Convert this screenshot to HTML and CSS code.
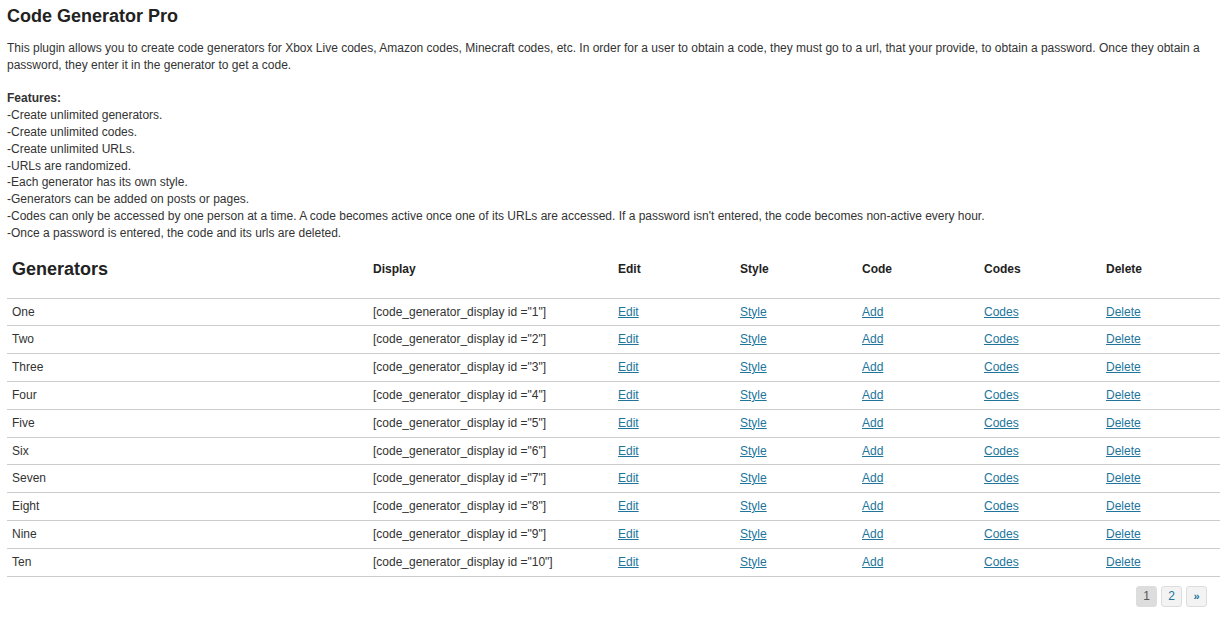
FILE: index.html
```html
<!DOCTYPE html>
<html>
<head>
<meta charset="utf-8">
<title>Code Generator Pro</title>
<link rel="stylesheet" href="styles.css">
</head>
<body>
<div class="wrap">
  <h1 class="title">Code Generator Pro</h1>
  <p class="intro">This plugin allows you to create code generators for Xbox Live codes, Amazon codes, Minecraft codes, etc. In order for a user to obtain a code, they must go to a url, that your provide, to obtain a password. Once they obtain a password, they enter it in the generator to get a code.</p>
  <div class="features">
    <strong>Features:</strong><br>
    -Create unlimited generators.<br>
    -Create unlimited codes.<br>
    -Create unlimited URLs.<br>
    -URLs are randomized.<br>
    -Each generator has its own style.<br>
    -Generators can be added on posts or pages.<br>
    -Codes can only be accessed by one person at a time. A code becomes active once one of its URLs are accessed. If a password isn't entered, the code becomes non-active every hour.<br>
    -Once a password is entered, the code and its urls are deleted.
  </div>
  <table class="gens">
    <colgroup>
      <col class="c-name"><col class="c-display"><col class="c-act"><col class="c-act"><col class="c-act"><col class="c-act"><col>
    </colgroup>
    <thead>
      <tr>
        <th class="th-main">Generators</th>
        <th>Display</th>
        <th>Edit</th>
        <th>Style</th>
        <th>Code</th>
        <th>Codes</th>
        <th>Delete</th>
      </tr>
    </thead>
    <tbody>
      <tr><td>One</td><td>[code_generator_display id ="1"]</td><td><a href="#">Edit</a></td><td><a href="#">Style</a></td><td><a href="#">Add</a></td><td><a href="#">Codes</a></td><td><a href="#">Delete</a></td></tr>
      <tr><td>Two</td><td>[code_generator_display id ="2"]</td><td><a href="#">Edit</a></td><td><a href="#">Style</a></td><td><a href="#">Add</a></td><td><a href="#">Codes</a></td><td><a href="#">Delete</a></td></tr>
      <tr><td>Three</td><td>[code_generator_display id ="3"]</td><td><a href="#">Edit</a></td><td><a href="#">Style</a></td><td><a href="#">Add</a></td><td><a href="#">Codes</a></td><td><a href="#">Delete</a></td></tr>
      <tr><td>Four</td><td>[code_generator_display id ="4"]</td><td><a href="#">Edit</a></td><td><a href="#">Style</a></td><td><a href="#">Add</a></td><td><a href="#">Codes</a></td><td><a href="#">Delete</a></td></tr>
      <tr><td>Five</td><td>[code_generator_display id ="5"]</td><td><a href="#">Edit</a></td><td><a href="#">Style</a></td><td><a href="#">Add</a></td><td><a href="#">Codes</a></td><td><a href="#">Delete</a></td></tr>
      <tr><td>Six</td><td>[code_generator_display id ="6"]</td><td><a href="#">Edit</a></td><td><a href="#">Style</a></td><td><a href="#">Add</a></td><td><a href="#">Codes</a></td><td><a href="#">Delete</a></td></tr>
      <tr><td>Seven</td><td>[code_generator_display id ="7"]</td><td><a href="#">Edit</a></td><td><a href="#">Style</a></td><td><a href="#">Add</a></td><td><a href="#">Codes</a></td><td><a href="#">Delete</a></td></tr>
      <tr><td>Eight</td><td>[code_generator_display id ="8"]</td><td><a href="#">Edit</a></td><td><a href="#">Style</a></td><td><a href="#">Add</a></td><td><a href="#">Codes</a></td><td><a href="#">Delete</a></td></tr>
      <tr><td>Nine</td><td>[code_generator_display id ="9"]</td><td><a href="#">Edit</a></td><td><a href="#">Style</a></td><td><a href="#">Add</a></td><td><a href="#">Codes</a></td><td><a href="#">Delete</a></td></tr>
      <tr><td>Ten</td><td>[code_generator_display id ="10"]</td><td><a href="#">Edit</a></td><td><a href="#">Style</a></td><td><a href="#">Add</a></td><td><a href="#">Codes</a></td><td><a href="#">Delete</a></td></tr>
    </tbody>
  </table>
  <div class="pager">
    <span class="page current">1</span>
    <a class="page" href="#">2</a>
    <a class="page next" href="#">»</a>
  </div>
</div>
</body>
</html>
```

FILE: styles.css
```css
html, body {
  margin: 0;
  padding: 0;
  background: #fff;
}
body {
  font-family: "Liberation Sans", Arial, sans-serif;
  font-size: 12px;
  line-height: 16.8px;
  color: #333;
}
.wrap {
  padding-left: 7px;
}
.title {
  font-size: 18px;
  line-height: 22px;
  font-weight: bold;
  color: #222;
  margin: 0;
  padding-top: 5px;
}
.intro {
  margin: 13px 0 16.8px 0;
}
.features strong {
  color: #333;
}
.gens {
  width: 100%;
  border-collapse: collapse;
  margin-top: 0;
  table-layout: fixed;
}
.c-name { width: 361px; }
.c-display { width: 245px; }
.c-act { width: 122px; }
.gens th {
  text-align: left;
  font-size: 12px;
  font-weight: bold;
  color: #222;
  height: 56px;
  padding: 0 5px;
  vertical-align: middle;
  border-bottom: 1px solid #ccc;
}
.gens th.th-main {
  font-size: 18px;
}
.gens td {
  padding: 5px 5px;
  border-bottom: 1px solid #ccc;
  vertical-align: middle;
}
.gens a {
  color: #21759b;
  text-decoration: underline;
}
.pager {
  display: flex;
  justify-content: flex-end;
  gap: 4px;
  padding: 9px 13px 0 0;
}
.page {
  display: flex;
  align-items: center;
  justify-content: center;
  width: 19px;
  height: 19px;
  border: 1px solid #ddd;
  border-radius: 3px;
  background: #f3f3f3;
  color: #21759b;
  text-decoration: none;
  font-size: 12px;
}
.page.current {
  background: #ddd;
  color: #555;
}
.page.next {
  font-size: 11px;
  font-weight: bold;
}
```
